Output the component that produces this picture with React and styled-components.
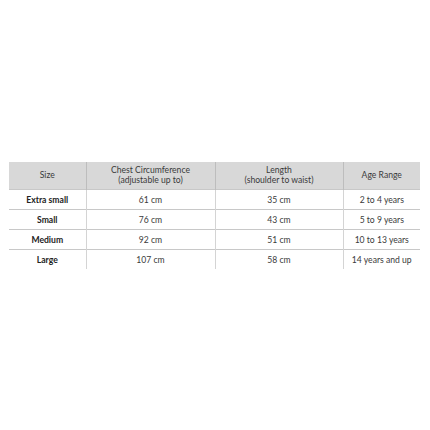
import React from 'react';
import styled, { createGlobalStyle } from 'styled-components';

const GlobalStyle = createGlobalStyle`
  html, body {
    margin: 0;
    padding: 0;
    background: #ffffff;
  }
`;

const Page = styled.div`
  width: 430px;
  height: 430px;
  display: flex;
  flex-direction: column;
  align-items: flex-start;
  padding: 162px 0 0 9px;
  box-sizing: border-box;
  font-family: Lato, "Open Sans", sans-serif;
  color: #3a3a3a;
`;

const Table = styled.table`
  width: 411px;
  border-collapse: collapse;
  table-layout: fixed;
`;

const HeadCell = styled.th`
  background: #d8d8d8;
  height: 27px;
  padding: 0;
  font-size: 8.6px;
  font-weight: 400;
  line-height: 9.5px;
  text-align: center;
  vertical-align: middle;
  border-left: 1px solid #bdbdbd;
  &:first-child { border-left: none; }
`;

const Cell = styled.td`
  height: 19px;
  padding: 0;
  font-size: 8.6px;
  font-weight: ${p => (p.$bold ? 700 : 400)};
  color: ${p => (p.$bold ? '#222' : '#3a3a3a')};
  text-align: center;
  vertical-align: middle;
  border-left: 1px solid #d4d4d4;
  border-top: 1px solid #c8c8c8;
  &:first-child { border-left: none; }
`;

const rows = [
  ['Extra small', '61 cm', '35 cm', '2 to 4 years'],
  ['Small', '76 cm', '43 cm', '5 to 9 years'],
  ['Medium', '92 cm', '51 cm', '10 to 13 years'],
  ['Large', '107 cm', '58 cm', '14 years and up'],
];

export default function App() {
  return (
    <>
      <GlobalStyle />
      <Page>
        <Table>
          <colgroup>
            <col style={{ width: 77 }} />
            <col style={{ width: 129 }} />
            <col style={{ width: 128 }} />
            <col style={{ width: 77 }} />
          </colgroup>
          <thead>
            <tr>
              <HeadCell>Size</HeadCell>
              <HeadCell>Chest Circumference<br />(adjustable up to)</HeadCell>
              <HeadCell>Length<br />(shoulder to waist)</HeadCell>
              <HeadCell>Age Range</HeadCell>
            </tr>
          </thead>
          <tbody>
            {rows.map((r, i) => (
              <tr key={i}>
                <Cell $bold>{r[0]}</Cell>
                <Cell>{r[1]}</Cell>
                <Cell>{r[2]}</Cell>
                <Cell>{r[3]}</Cell>
              </tr>
            ))}
          </tbody>
        </Table>
      </Page>
    </>
  );
}
